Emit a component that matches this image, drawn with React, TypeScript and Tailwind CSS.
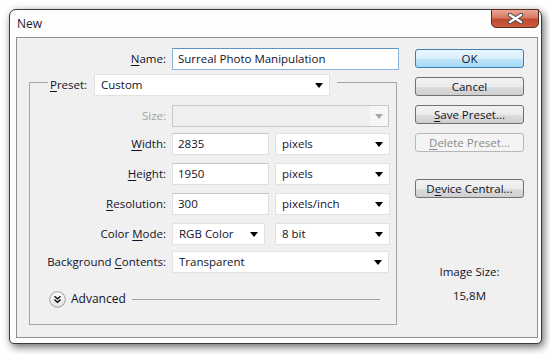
import clsx from "clsx";
import type { ReactNode } from "react";

const font = "font-['Open_Sans',_'Noto_Sans',_sans-serif]";

function Key({ children }: { children: ReactNode }) {
  return <span className="underline decoration-1 underline-offset-[2px]">{children}</span>;
}

function Arrow({ muted }: { muted?: boolean }) {
  return (
    <svg width="8" height="5" viewBox="0 0 8 5" className="shrink-0">
      <path d="M0 0h8L4 5z" fill={muted ? "#a8a8a8" : "#000"} />
    </svg>
  );
}

function Dropdown({ value, className, disabled }: { value?: string; className: string; disabled?: boolean }) {
  return (
    <div
      className={clsx(
        "flex h-[22px] items-center justify-between border pl-[6px]",
        disabled ? "border-[#c6c6c6] bg-[#efefef] pr-0" : "border-[#e2e2e2] bg-white pr-[6px]",
        className
      )}
    >
      <span className="leading-none">{value}</span>
      {disabled ? (
        <div className="flex h-full w-[18px] items-center justify-center bg-[#f6f6f6]">
          <Arrow muted />
        </div>
      ) : (
        <Arrow />
      )}
    </div>
  );
}

function Field({ value, className }: { value: string; className: string }) {
  return (
    <div className={clsx("flex h-[22px] items-center border border-[#dcdfe4] border-t-[#c3c6cb] bg-white pl-[5px] leading-none", className)}>
      {value}
    </div>
  );
}

function Row({ label, children, className, muted }: { label: ReactNode; children: ReactNode; className?: string; muted?: boolean }) {
  return (
    <div className={clsx("flex items-center gap-[6px]", className)}>
      <div className={clsx("w-[122px] shrink-0 whitespace-nowrap text-right", muted && "text-[#a3a3a3]")}>{label}</div>
      {children}
    </div>
  );
}

function Button({ children, variant }: { children: ReactNode; variant?: "default" | "disabled" }) {
  return (
    <button
      className={clsx(
        "flex h-[19px] w-[109px] items-center justify-center rounded-[3px] border leading-none",
        variant === "default" && "border-[#3c7fb1] bg-[linear-gradient(#eaf6fd_0%,#d9f0fc_50%,#bee6fd_51%,#a7d9f5_100%)]",
        variant === "disabled" && "border-[#b4b8bb] bg-[#f4f4f4] text-[#8b8b8b]",
        !variant && "border-[#707070] bg-[linear-gradient(#f2f2f2_0%,#ebebeb_50%,#dddddd_51%,#cfcfcf_100%)]"
      )}
    >
      {children}
    </button>
  );
}

function AdvancedIcon() {
  return (
    <svg width="17" height="17" viewBox="0 0 17 17">
      <defs>
        <linearGradient id="adv" x1="0" y1="0" x2="0" y2="1">
          <stop offset="0" stopColor="#ffffff" />
          <stop offset="1" stopColor="#e2e2e2" />
        </linearGradient>
      </defs>
      <circle cx="8.5" cy="8.5" r="7.8" fill="url(#adv)" stroke="#9a9a9a" />
      <path d="M5.5 5.2l3 2.6 3-2.6M5.5 8.6l3 2.6 3-2.6" fill="none" stroke="#111" strokeWidth="1.4" />
    </svg>
  );
}

function CloseGlyph() {
  return (
    <svg width="17" height="11" viewBox="0 0 17 11">
      <path d="M3 2l11 7M14 2l-11 7" stroke="#4a4a4a" strokeWidth="4.4" strokeLinecap="round" />
      <path d="M3 2l11 7M14 2l-11 7" stroke="#ffffff" strokeWidth="2.4" strokeLinecap="round" />
    </svg>
  );
}

export default function App() {
  return (
    <div className={clsx("h-[354px] w-[550px] overflow-hidden bg-white pl-[9px] pt-[9px] text-[11.5px] text-[#12122a]", font)}>
      <div className="relative flex h-[335px] w-[533px] flex-col rounded-b-[5px] rounded-t-[7px] border border-[#3a3a3a] bg-[#fdfdfd] pb-[5px] pl-[6px] pr-[3px] shadow-[2px_3px_8px_rgba(0,0,0,0.6)]">
        <div className="flex h-[27px] items-center pl-[1px] text-[12px] text-[#1b1b2f]">New</div>
        <div className="absolute right-[2px] top-[-1px] flex h-[19px] w-[48px] items-center justify-center rounded-b-[5px] border border-[#5e2b22] bg-[linear-gradient(#e8a494_0%,#d97a66_45%,#c24a31_55%,#c95a3d_100%)]">
          <CloseGlyph />
        </div>

        <div className="flex flex-1 border border-[#8f9090] bg-[#f0f0f0]">
          <div className="flex w-[380px] shrink-0 flex-col pl-[12px] pt-[10px]">
            <div className="flex items-center gap-[6px]">
              <div className="w-[137px] shrink-0 text-right">
                <Key>N</Key>ame:
              </div>
              <div className="flex h-[22px] w-[227px] shrink-0 items-center border border-[#8bb5de] border-t-[#5d93c6] bg-white pl-[5px] leading-none">
                Surreal Photo Manipulation
              </div>
            </div>

            <fieldset className="mt-[-1px] h-[256px] w-[368px] shrink-0 border border-[#a5a5a5] pl-[14px] pt-[9px]">
              <legend className="ml-[4px] flex items-center gap-[5px] pl-[2px] pr-[7px] pt-[5px]">
                <span className="w-[39px] whitespace-nowrap">
                  <Key>P</Key>reset:
                </span>
                <Dropdown value="Custom" className="w-[236px]" />
              </legend>

              <Row label="Size:" muted>
                <Dropdown className="w-[217px]" disabled />
              </Row>
              <Row label={<><Key>W</Key>idth:</>} className="mt-[6px]">
                <Field value="2835" className="w-[97px]" />
                <Dropdown value="pixels" className="w-[115px]" />
              </Row>
              <Row label={<><Key>H</Key>eight:</>} className="mt-[8px]">
                <Field value="1950" className="w-[97px]" />
                <Dropdown value="pixels" className="w-[115px]" />
              </Row>
              <Row label={<><Key>R</Key>esolution:</>} className="mt-[8px]">
                <Field value="300" className="w-[97px]" />
                <Dropdown value="pixels/inch" className="w-[115px]" />
              </Row>
              <Row label={<>Color <Key>M</Key>ode:</>} className="mt-[8px]">
                <Dropdown value="RGB Color" className="mr-[4px] w-[93px]" />
                <Dropdown value="8 bit" className="w-[115px]" />
              </Row>
              <Row label={<>Background <Key>C</Key>ontents:</>} className="mt-[6px]">
                <Dropdown value="Transparent" className="w-[217px]" />
              </Row>

              <div className="mr-[16px] mt-[17px] flex h-[18px] items-center">
                <div className="ml-[5px]">
                  <AdvancedIcon />
                </div>
                <span className="ml-[5px] text-[12px]">Advanced</span>
                <div className="ml-[6px] h-px flex-1 bg-[#a0a0a0]" />
              </div>
            </fieldset>
          </div>

          <div className="ml-[18px] flex flex-col pt-[11px]">
            <div className="flex flex-col gap-[9px]">
              <Button variant="default">OK</Button>
              <Button>Cancel</Button>
              <Button>
                <span>
                  <Key>S</Key>ave Preset...
                </span>
              </Button>
              <Button variant="disabled">
                <span>
                  <Key>D</Key>elete Preset...
                </span>
              </Button>
            </div>
            <div className="mt-[27px]">
              <Button>
                <span>
                  D<Key>e</Key>vice Central...
                </span>
              </Button>
            </div>
            <div className="mt-[66px] flex flex-col items-center gap-[8px] leading-[16px]">
              <span>Image Size:</span>
              <span>15,8M</span>
            </div>
          </div>
        </div>
      </div>
    </div>
  );
}
